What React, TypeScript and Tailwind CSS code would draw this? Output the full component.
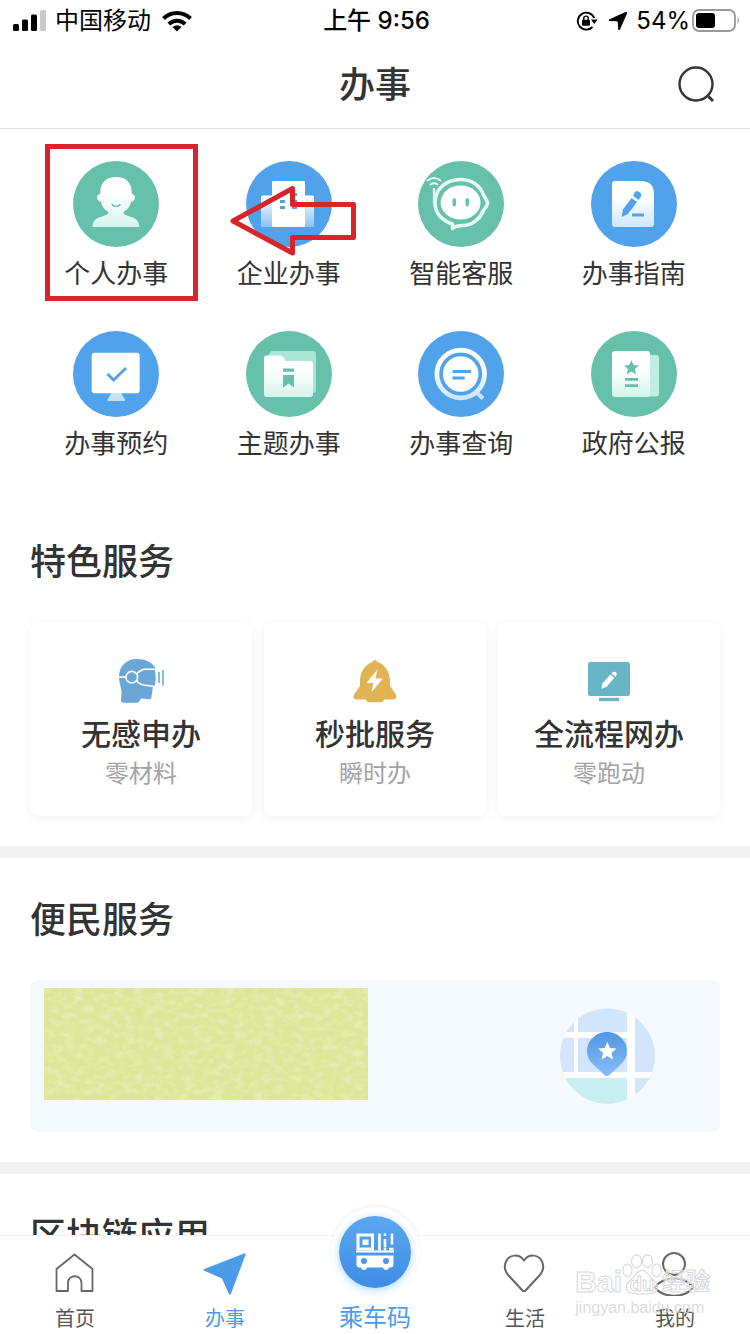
import React from "react";

const BLUE = "#50a3ea";
const GREEN = "#67c1aa";

function Gradient({ id, from, to }: { id: string; from: string; to: string }) {
  return (
    <linearGradient id={id} x1="0" y1="0" x2="0" y2="1">
      <stop offset="0.35" stopColor={from} />
      <stop offset="1" stopColor={to} />
    </linearGradient>
  );
}

function Disc({ color, children }: { color: string; children: React.ReactNode }) {
  return (
    <svg viewBox="0 0 86 86" className="size-[86px]" aria-hidden="true">
      <defs>
        <Gradient id="fade-green" from="#ffffff" to="#d3f5ec" />
        <Gradient id="fade-blue" from="#ffffff" to="#cfe6fb" />
        <linearGradient id="fade-wing" x1="0" y1="0" x2="0" y2="1">
          <stop offset="0" stopColor="#ffffff" />
          <stop offset="1" stopColor="#8cc3f3" />
        </linearGradient>
      </defs>
      <circle cx="43" cy="43" r="43" fill={color} />
      {children}
    </svg>
  );
}

const PersonIcon = () => (
  <Disc color={GREEN}>
    <path
      d="M43 16C33 16 27.300 22 27.300 31v2.200c-4.600-.6-4.200 6.800.6 7.600C29 46 32 49 35.500 51 35.500 57 20 53 19.500 66h46.800C66 53 50.500 57 50.500 51c3.500-2 6.500-5 7.600-10.200 4.800-.8 5.200-8.200.6-7.600V31C58.700 22 53 16 43 16Z"
      fill="url(#fade-green)"
    />
    <path d="M39 43c1.600 3.400 6.600 3.400 8.200 0" fill="none" stroke={GREEN} strokeWidth="1.600" />
  </Disc>
);

const BuildingIcon = () => (
  <Disc color={BLUE}>
    <path d="M15 36q0-1.500 1.500-1.500H26V66H15Z" fill="url(#fade-wing)" />
    <path d="M59 34.500h7.500Q68 34.500 68 36v30h-9Z" fill="url(#fade-wing)" />
    <rect x="26" y="20" width="33" height="46" rx="1" fill="#fff" />
    <path d="M34 32h5v3h-5zM46 32h5v3h-5zM34 39h5v3h-5zM46 39h5v3h-5zM34 45h5v3h-5zM46 45h5v3h-5z" fill={BLUE} />
  </Disc>
);

const RobotIcon = () => (
  <Disc color={GREEN}>
    <path
      d="M17 42C17 28 28 18.500 42.500 18.500c12 0 20 7 23 15.500 2.500 4 4 6 4 8s-1.500 4-4 7.500C62 58 54 64.500 45 64.500c-4 0-7 0-10.500 3V63C25 60 17 53 17 42Z"
      fill="none"
      stroke="#e6fbf5"
      strokeWidth="3.600"
      strokeLinejoin="round"
    />
    <path d="M16 27v15" stroke="#e6fbf5" strokeWidth="2.200" />
    <path d="M9.500 19.500q6.500-5 13 0M12.500 23.500q3.500-2.500 7 0" fill="none" stroke="#e6fbf5" strokeWidth="1.900" strokeLinecap="round" />
    <ellipse cx="42.600" cy="41.500" rx="20" ry="17" fill="#fff" />
    <path d="M36.300 39v4.600M49.300 39v4.600" stroke={GREEN} strokeWidth="3.600" strokeLinecap="round" />
  </Disc>
);

const GuideIcon = () => (
  <Disc color={BLUE}>
    <path d="M24 20h27q12 1 12 13v30q0 3-3 3H24q-3 0-3-3V23q0-3 3-3Z" fill="url(#fade-blue)" />
    <path d="m40.500 37 5.600 4-9.100 12-6.300 3 1.300-7.500Z" fill={BLUE} />
    <path d="m42 35 1.600-3.200c2-3.600 8-.3 6.300 3.700L47.700 39Z" fill={BLUE} />
    <path d="M41 54h12" stroke={BLUE} strokeWidth="3" />
  </Disc>
);

const MonitorCheckIcon = () => (
  <Disc color={BLUE}>
    <path d="M38.500 62h9.500l4 6.500q.5 1.500-1 1.500H35.500q-1.500 0-1-1.500Z" fill="#c4e1fa" />
    <rect x="18.700" y="21.700" width="48" height="40.600" rx="3" fill="#fff" />
    <path d="m34.500 43 6.200 6 12.300-12" fill="none" stroke={BLUE} strokeWidth="2.800" />
  </Disc>
);

const FolderIcon = () => (
  <Disc color={GREEN}>
    <path d="M25 20h42q3 0 3 3v36q0 3-3 3H30L21 27Z" fill="#a9e6d6" />
    <path d="M21 24.500h13q2.500 0 4 2.500l1.500 3H64q3 0 3 3v30q0 3-3 3H21q-3 0-3-3V27.500q0-3 3-3Z" fill="url(#fade-green)" />
    <path d="M37 37.500h11v3.200H37zM37 44h11v12.500l-5.500-4-5.500 4Z" fill={GREEN} />
  </Disc>
);

const QueryIcon = () => (
  <Disc color={BLUE}>
    <path d="m58 61 7 6.500" stroke="#cde6fb" strokeWidth="4" />
    <circle cx="42.700" cy="43" r="23.800" fill="none" stroke="url(#fade-blue)" strokeWidth="4.800" />
    <circle cx="42.700" cy="43" r="17.800" fill="#fff" />
    <path d="M34.500 40.500H53M34.500 47h12.200" stroke={BLUE} strokeWidth="3.200" />
  </Disc>
);

const GazetteIcon = () => (
  <Disc color={GREEN}>
    <path d="M57 24h8q3 0 3 3v35.500q0 3-3 3h-8Z" fill="#c0ede1" />
    <rect x="21" y="20" width="38" height="46" rx="3" fill="url(#fade-green)" />
    <path d="m40.400 29.200 2.200 4.800 5.200.5-3.900 3.500 1.200 5.200-4.700-2.700-4.700 2.700 1.200-5.200-3.900-3.500 5.200-.5Z" fill={GREEN} />
    <path d="M34 48.300h13M34 54.700h13" stroke={GREEN} strokeWidth="2.800" />
  </Disc>
);

const VrIcon = () => (
  <svg viewBox="0 0 46 46" className="size-[46px]" aria-hidden="true">
    <path
      d="M19 1C8 1 1 8.500 1 18.500c0 7 2.500 11 2.500 15.500L3 42q0 2.700 2.500 2.700H19q2.500 0 3-2.700.5-2 2.500-1.500l6 .7q3 .3 3-2.700l2-13L37.500 10C34 4 27 1 19 1Z"
      fill="#6aa7d6"
    />
    <path d="M0 19h8" stroke="#fff" strokeWidth="1.600" />
    <path d="M20.500 14 25.500 11.200h12q2 8 0 17.300l-12-1.500c-8.500-2-9.500-9-5-13Z" fill="#6aa7d6" stroke="#fff" strokeWidth="1.600" />
    <circle cx="13.800" cy="19.200" r="5.800" fill="#6aa7d6" stroke="#fff" strokeWidth="1.600" />
    <path d="M41 14v11M45 12v15.500" stroke="#6aa7d6" strokeWidth="1.500" />
  </svg>
);

const BellIcon = () => (
  <svg viewBox="0 0 46 46" className="size-[46px]" aria-hidden="true">
    <path
      d="M23 2q1.200 0 2.500 1.800C34 7.500 38 14 38 24v4l6 8.500q1.500 4.500-2.500 5h-9q-1.500 2.800-4 2.800h-11q-2.500 0-4-2.800h-9Q.5 41 2 36.500L8 28v-4C8 14 12 7.500 20.500 3.800 21.800 2 23 2 23 2Z"
      fill="#e0b354"
    />
    <path d="M25.500 11.500 14.500 25h7l-2 9L31 20.500h-7.500Z" fill="#fff" />
  </svg>
);

const ScreenPenIcon = () => (
  <svg viewBox="0 0 46 46" className="size-[46px]" aria-hidden="true">
    <rect x="2" y="4" width="42" height="34" rx="2.500" fill="#68b5c5" />
    <path d="M13 41.500h20" stroke="#68b5c5" strokeWidth="3.400" />
    <path d="m24.500 16.500 3.800 3.200-8 9.300-4.800 1.700.7-5Z" fill="#fff" />
    <path d="M25.500 15.300q2.500-2.500 4.600-.8 1.700 2-.8 4.200Z" fill="#fff" />
  </svg>
);

const MapIcon = () => (
  <svg viewBox="0 0 96 96" className="mr-16 mt-5 size-24" aria-hidden="true">
    <defs>
      <clipPath id="map-round">
        <circle cx="47.500" cy="48" r="47.500" />
      </clipPath>
      <linearGradient id="pin" x1="0" y1="0" x2="0" y2="1">
        <stop offset="0" stopColor="#5097e5" />
        <stop offset="1" stopColor="#86bdf7" />
      </linearGradient>
    </defs>
    <g clipPath="url(#map-round)">
      <rect width="96" height="96" fill="#d2e5fc" />
      <rect y="67" width="70" height="29" fill="#c8eff0" />
      <path d="M0 67h96M0 27h70" stroke="#fff" strokeWidth="6" />
      <path d="M16 0v66" stroke="#fff" strokeWidth="4" />
      <path d="M71 0v96" stroke="#fff" strokeWidth="8" />
    </g>
    <path d="M47 24c11 0 20 8.500 20 19.500 0 10-9 15-17 23q-3 3-6 0c-8-8-17-13-17-23C27 32.500 36 24 47 24Z" fill="url(#pin)" />
    <path d="m47.300 34 2.700 6 6.500.6-5 4.300 1.600 6.500-5.800-3.500-5.800 3.500 1.600-6.500-5-4.300 6.500-.6Z" fill="#fff" />
  </svg>
);

const HomeIcon = () => (
  <svg viewBox="0 0 44 44" className="size-11" fill="none" stroke="#666" strokeWidth="1.800" strokeLinejoin="round" aria-hidden="true">
    <path d="M21.500 2.500 39.500 17v22H28.500V31c0-9-13.500-9-13.500 0v8H3.500V17Z" />
  </svg>
);

const SendIcon = () => (
  <svg viewBox="0 0 44 44" className="size-11" aria-hidden="true">
    <path d="M41.700 1.200q1.300-.2.900 1.200L28 41.800q-1 2.200-2.200 0L19 26.500 1.300 18.800q-1.800-1 0-1.900Z" fill="#4c9bea" />
  </svg>
);

const HeartIcon = () => (
  <svg viewBox="0 0 44 44" className="size-11" fill="none" stroke="#666" strokeWidth="2" strokeLinejoin="round" aria-hidden="true">
    <path d="M21 8.500C16 1.500 7 2.500 3.500 8.500c-3.300 6-1 12 3 16L19.500 38.500q1.500 1.500 3 0l13-14c4-4 6.300-10 3-16C35 2.500 26 1.500 21 8.500Z" />
  </svg>
);

const ProfileIcon = () => (
  <svg viewBox="0 0 44 44" className="size-11" fill="none" stroke="#666" strokeWidth="2" strokeLinejoin="round" aria-hidden="true">
    <circle cx="21" cy="12" r="11" />
    <path d="M1.500 35.500C11 23.500 31 23.500 40.500 35.500 31 46.500 11 46.500 1.500 35.500Z" />
  </svg>
);

const BusCodeIcon = () => (
  <svg viewBox="0 0 38 38" className="size-[38px]" aria-hidden="true">
    <path d="M2 2h14.500v14H2Z" fill="none" stroke="#fff" strokeWidth="3" />
    <rect x="6.500" y="6.500" width="6" height="5.500" fill="#fff" />
    <path d="M23.500.5v17M29 .5v2.500M29 6v8.500M36 .5v11M29 17.500V15M33 16h4.500" stroke="#fff" strokeWidth="2.600" />
    <path d="M0 18.500h38" stroke="#fff" strokeWidth="2" />
    <path d="M.5 22.500h37V32q0 2-2.500 2.500h-2q-.5 2.500-3 2.500t-3-2.500H11Q10.500 37 8 37t-3-2.500H3Q.5 34 .5 32Z" fill="#fff" />
    <circle cx="8" cy="28" r="3" fill="#4796e9" />
    <circle cx="30" cy="28" r="3" fill="#4796e9" />
  </svg>
);

function StatusBar() {
  return (
    <div className="grid h-[42px] shrink-0 grid-cols-[1fr_auto_1fr] items-center pr-2.5 pl-[13px] text-2xl text-black">
      <div className="flex items-center">
        <svg viewBox="0 0 34 22" className="mr-2 h-[22px] w-[34px]" aria-hidden="true">
          <rect x="0" y="14" width="6" height="7" rx="1.500" />
          <rect x="9" y="9.500" width="6" height="11.500" rx="1.500" />
          <rect x="18" y="4.500" width="6" height="16.500" rx="1.500" />
          <rect x="27" y="0" width="6" height="21" rx="1.500" fill="#c9c9c9" />
        </svg>
        <span>中国移动</span>
        <svg viewBox="0 0 30 22" className="ml-[11px] h-[22px] w-[30px]" fill="none" stroke="#000" strokeWidth="4" aria-hidden="true">
          <path d="M1.500 8.500c7.500-7.300 19.500-7.300 27 0" />
          <path d="M6.800 14c4.600-4.400 11.800-4.400 16.400 0" />
          <path d="m15 21.500-4.500-4.600q4.500-3.400 9 0Z" fill="#000" stroke="none" />
        </svg>
      </div>
      <span className="font-medium">上午 9:56</span>
      <div className="flex items-center justify-end">
        <svg viewBox="0 0 22 20" className="mr-2.5 h-5 w-[22px]" aria-hidden="true">
          <path d="M18.200 7A8.500 8.500 0 1 0 16.500 16" fill="none" stroke="#000" strokeWidth="1.900" />
          <path d="M15 8.500h6.500l-3.200 4.500Z" />
          <rect x="6" y="8.800" width="8" height="6" rx="1" />
          <path d="M7.800 9V7.200c0-2.800 4.400-2.800 4.400 0V9" fill="none" stroke="#000" strokeWidth="1.400" />
        </svg>
        <svg viewBox="0 0 20 20" className="mr-2 size-5" aria-hidden="true">
          <path d="M17.500 1q2-.5 1.500 1.500L12 18.500q-1.200 1.800-1.800-.3L9.800 11.500q0-1.200-1.200-1.200L1.800 10Q-.2 9.300 1.500 8.300Z" />
        </svg>
        <span className="mr-0.5">54%</span>
        <svg viewBox="0 0 48 24" className="h-6 w-12" aria-hidden="true">
          <rect x="1" y="1" width="42" height="21" rx="6" fill="none" stroke="#999" strokeWidth="1.800" />
          <rect x="4" y="4" width="19" height="15" rx="3" />
          <path d="M45.500 8q3 3.500 0 7Z" fill="#999" />
        </svg>
      </div>
    </div>
  );
}

function TargetArrow() {
  return (
    <svg viewBox="0 0 132 76" className="pointer-events-none absolute left-6 top-[22px] h-[76px] w-[132px]" aria-hidden="true">
      <path d="M6 38 65.500 5.500v16h61v33h-61V70Z" fill="none" stroke="#d9242b" strokeWidth="5" strokeLinejoin="round" />
    </svg>
  );
}

const services = [
  { label: "个人办事", Icon: PersonIcon },
  { label: "企业办事", Icon: BuildingIcon },
  { label: "智能客服", Icon: RobotIcon },
  { label: "办事指南", Icon: GuideIcon },
  { label: "办事预约", Icon: MonitorCheckIcon },
  { label: "主题办事", Icon: FolderIcon },
  { label: "办事查询", Icon: QueryIcon },
  { label: "政府公报", Icon: GazetteIcon },
];

const features = [
  { title: "无感申办", note: "零材料", Icon: VrIcon },
  { title: "秒批服务", note: "瞬时办", Icon: BellIcon },
  { title: "全流程网办", note: "零跑动", Icon: ScreenPenIcon },
];

function SectionTitle({ children }: { children: React.ReactNode }) {
  return <h2 className="pt-[35px] text-4xl leading-[54px] font-medium text-[#333]">{children}</h2>;
}

function NavItem({ label, active, children }: { label: string; active?: boolean; children: React.ReactNode }) {
  return (
    <a href="#" aria-current={active ? "page" : undefined} className={`flex flex-col items-center gap-2 ${active ? "text-[#4c9bea]" : "text-[#555]"}`}>
      {children}
      <span className="text-xl leading-[30px]">{label}</span>
    </a>
  );
}

function Watermark() {
  return (
    <div className="pointer-events-none absolute right-10 bottom-4 flex flex-col font-['Liberation_Sans','Noto_Sans_CJK_SC',sans-serif]" aria-hidden="true">
      <div className="flex h-12 items-end text-white/60 [-webkit-text-stroke:1px_#d8d8d8]">
        <span className="text-3xl leading-8 font-bold">Bai</span>
        <div className="relative flex h-12 w-10 items-end justify-center">
          <svg viewBox="0 0 44 48" className="absolute inset-0 h-12 w-10" fill="#ffffff" fillOpacity="0.6" stroke="#d8d8d8" strokeWidth="1.200">
            <ellipse cx="6" cy="20" rx="5" ry="7" />
            <ellipse cx="16" cy="10" rx="5.500" ry="7" />
            <ellipse cx="28" cy="10" rx="5.500" ry="7" />
            <ellipse cx="38" cy="20" rx="5" ry="7" />
            <path d="M22 20c5 0 7 5 11 9s7 6 6 11-6 6-17 6-16-1-17-6 2-7 6-11 6-9 11-9Z" />
          </svg>
          <span className="relative text-xl leading-7 font-bold">du</span>
        </div>
        <span className="text-2xl leading-8 font-bold">经验</span>
      </div>
      <span className="text-base leading-5 text-[#d4d4d4]/80">jingyan.baidu.com</span>
    </div>
  );
}

export default function App() {
  return (
    <div className="relative flex h-dvh flex-col overflow-hidden bg-white font-['Inter','Noto_Sans_CJK_SC',sans-serif]">
      <StatusBar />
      <header className="grid h-[87px] shrink-0 grid-cols-[1fr_auto_1fr] items-center border-b border-[#dedede] px-8">
        <span />
        <h1 className="text-4xl font-medium text-[#333]">办事</h1>
        <button type="button" aria-label="搜索" className="justify-self-end">
          <svg viewBox="0 0 40 40" className="size-10" fill="none" stroke="#333" strokeWidth="2.400" aria-hidden="true">
            <circle cx="18" cy="19" r="16.500" />
            <path d="m30.500 31.500 4.500 4.500" strokeWidth="3" />
          </svg>
        </button>
      </header>

      <main className="min-h-0 flex-1 overflow-y-auto [scrollbar-width:none]">
        <section className="grid grid-cols-4 gap-y-[38px] px-[30px] pt-8 pb-[37px]">
          {services.map(({ label, Icon }, i) => (
            <a key={label} href="#" className="relative flex flex-col items-center gap-2">
              <Icon />
              <span className="text-[26px] leading-[38px] text-[#333]">{label}</span>
              {i === 0 && (
                <span className="pointer-events-none absolute -top-[17px] left-[15px] h-[157px] w-[153px] border-5 border-[#d9242b]" />
              )}
              {i === 1 && <TargetArrow />}
            </a>
          ))}
        </section>

        <section className="border-b-12 border-[#f2f2f2] px-[30px] pb-[30px]">
          <SectionTitle>特色服务</SectionTitle>
          <div className="mt-[33px] grid grid-cols-3 gap-3">
            {features.map(({ title, note, Icon }) => (
              <a key={title} href="#" className="flex flex-col items-center rounded-lg bg-white pt-9 pb-[26px] shadow-[0_2px_12px_rgba(0,0,0,0.06)]">
                <Icon />
                <span className="mt-2.5 text-3xl leading-10 font-medium text-[#333]">{title}</span>
                <span className="mt-1 text-2xl leading-8 text-[#a3a3a3]">{note}</span>
              </a>
            ))}
          </div>
        </section>

        <section className="border-b-12 border-[#f2f2f2] px-[30px] pb-[30px]">
          <SectionTitle>便民服务</SectionTitle>
          <a href="#" aria-label="便民服务地图" className="mt-[33px] flex items-start justify-between rounded-lg bg-[#f4f9fd] pt-2 pb-7 pl-3.5">
            <svg className="h-28 w-[324px]" aria-hidden="true">
              <filter id="grain">
                <feTurbulence type="fractalNoise" baseFrequency="0.1 0.16" numOctaves="4" seed="4" />
                <feColorMatrix values="0 0 0 0 1  0 0 0 0 1  0 0 0 0 0.85  2 0 0 0 -0.8" />
              </filter>
              <rect width="100%" height="100%" fill="#dce598" />
              <rect width="100%" height="100%" filter="url(#grain)" opacity="0.35" />
            </svg>
            <MapIcon />
          </a>
        </section>

        <section className="px-[30px] pb-8">
          <SectionTitle>区块链应用</SectionTitle>
        </section>
      </main>

      <nav className="relative grid shrink-0 grid-cols-5 border-t border-[#f0f0f0] bg-white pt-4">
        <NavItem label="首页"><HomeIcon /></NavItem>
        <NavItem label="办事" active><SendIcon /></NavItem>
        <a href="#" className="flex flex-col items-center gap-2 text-[#4c9bea]">
          <span className="-mt-[45px] flex size-[89px] items-center justify-center rounded-full bg-white shadow-[0_-2px_4px_rgba(0,0,0,0.05)]">
            <span className="flex size-[72px] items-center justify-center rounded-full bg-linear-to-b from-[#5aa6ee] to-[#3f8de8] shadow-[0_2px_8px_rgba(80,170,250,0.45)]">
              <BusCodeIcon />
            </span>
          </span>
          <span className="text-2xl leading-7">乘车码</span>
        </a>
        <NavItem label="生活"><HeartIcon /></NavItem>
        <NavItem label="我的"><ProfileIcon /></NavItem>
        <Watermark />
      </nav>
    </div>
  );
}
